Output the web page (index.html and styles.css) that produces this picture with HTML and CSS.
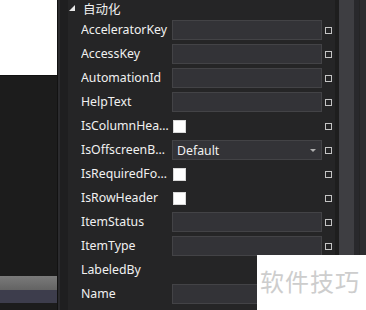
FILE: index.html
```html
<!DOCTYPE html>
<html lang="zh-cn">
<head>
    <meta charset="UTF-8">
    <meta name="viewport" content="width=device-width, initial-scale=1.0">
    <title>属性 - 自动化</title>
    <link rel="stylesheet" href="styles.css">
</head>
<body>
    <div class="screen">
        <div class="left-pane">
            <div class="preview"></div>
            <div class="status-bar"></div>
            <div class="tab-bar"></div>
        </div>
        <div class="splitter"></div>

        <div class="props">
            <div class="group-head">
                <svg class="expander" width="6" height="6" viewBox="0 0 6 6"><polygon points="0,6 6,6 6,0" /></svg>
                <span>自动化</span>
            </div>
            <div class="prop-row">
                <span class="prop-name">AcceleratorKey</span>
                <span class="prop-input"></span>
                <span class="prop-mark"></span>
            </div>
            <div class="prop-row">
                <span class="prop-name">AccessKey</span>
                <span class="prop-input"></span>
                <span class="prop-mark"></span>
            </div>
            <div class="prop-row">
                <span class="prop-name">AutomationId</span>
                <span class="prop-input"></span>
                <span class="prop-mark"></span>
            </div>
            <div class="prop-row">
                <span class="prop-name">HelpText</span>
                <span class="prop-input"></span>
                <span class="prop-mark"></span>
            </div>
            <div class="prop-row">
                <span class="prop-name">IsColumnHeader</span>
                <span class="prop-value"><span class="check"></span></span>
                <span class="prop-mark"></span>
            </div>
            <div class="prop-row">
                <span class="prop-name">IsOffscreenBehavior</span>
                <span class="prop-input select">Default<span class="arrow"></span></span>
                <span class="prop-mark"></span>
            </div>
            <div class="prop-row">
                <span class="prop-name">IsRequiredForForm</span>
                <span class="prop-value"><span class="check"></span></span>
                <span class="prop-mark"></span>
            </div>
            <div class="prop-row">
                <span class="prop-name">IsRowHeader</span>
                <span class="prop-value"><span class="check"></span></span>
                <span class="prop-mark"></span>
            </div>
            <div class="prop-row">
                <span class="prop-name">ItemStatus</span>
                <span class="prop-input"></span>
                <span class="prop-mark"></span>
            </div>
            <div class="prop-row">
                <span class="prop-name">ItemType</span>
                <span class="prop-input"></span>
                <span class="prop-mark"></span>
            </div>
            <div class="prop-row">
                <span class="prop-name">LabeledBy</span>
            </div>
            <div class="prop-row">
                <span class="prop-name">Name</span>
                <span class="prop-input"></span>
                <span class="prop-mark"></span>
            </div>
        </div>

        <div class="scroll-gap"></div>
        <div class="scrollbar"></div>
        <div class="scroll-edge"></div>

        <div class="watermark">软件技巧</div>
    </div>
</body>
</html>
```

FILE: styles.css
```css
/* base */
* {
    margin: 0;
    padding: 0;
    box-sizing: border-box;
}

body {
    background: #1e1e1e;
    font-family: "Noto Sans", "Noto Sans CJK SC", sans-serif;
    font-size: 12.3px;
    color: #f1f1f1;
}

.screen {
    position: relative;
    display: flex;
    width: 366px;
    height: 310px;
    overflow: hidden;
    background: #252526;
}

/* designer area on the left */
.left-pane {
    display: flex;
    flex-direction: column;
    width: 57px;
    background: #1c1c1c;
}

.preview {
    height: 76px;
    background: #ffffff;
    border-bottom: 1px solid #111111;
}

.status-bar {
    margin-top: auto;
    height: 14px;
    background: linear-gradient(#7a7a7a, #636363);
}

.tab-bar {
    height: 13px;
    margin-bottom: 7px;
    background: #3d3d4c;
}

.splitter {
    width: 3px;
    background: #2b2b2e;
    border-left: 1px solid #121212;
}

/* property grid */
.props {
    width: 275px;
    background: #252526;
    border-left: 8px solid #1f1f20;
}

.group-head {
    display: flex;
    align-items: center;
    height: 18px;
    padding-left: 1px;
}

.expander {
    fill: #e8e8e8;
    margin-right: 8px;
    margin-top: -3px;
}

.group-head span {
    font-family: "Noto Sans CJK SC", sans-serif;
    font-size: 12.5px;
    margin-top: -1px;
}

.prop-row {
    display: flex;
    align-items: center;
    height: 24px;
    padding-left: 13px;
}

.prop-name {
    width: 91px;
    padding-right: 3px;
    margin-top: -1px;
    white-space: nowrap;
    overflow: hidden;
    text-overflow: ellipsis;
}

.prop-input,
.prop-value {
    position: relative;
    display: flex;
    align-items: center;
    width: 150px;
    height: 20px;
}

.prop-input {
    background: #333337;
    border: 1px solid #434346;
}

.select {
    padding-left: 4px;
}

.arrow {
    position: absolute;
    right: 5px;
    top: 8px;
    border-left: 3px solid transparent;
    border-right: 3px solid transparent;
    border-top: 3px solid #b0b0b0;
}

.check {
    width: 13px;
    height: 13px;
    margin-left: 1px;
    background: #ffffff;
    border: 1px solid #d8d8d8;
}

.prop-mark {
    width: 7px;
    height: 7px;
    margin-left: 3px;
    border: 1px solid #c4c4c4;
}

/* scrollbar strip */
.scroll-gap {
    width: 4px;
    background: #1e1e1e;
}

.scrollbar {
    width: 15px;
    background: #3e3e42;
}

.scroll-edge {
    flex: 1;
    background: #2d2d30;
    border-left: 5px solid #29292c;
    box-shadow: inset 1px 0 0 #252526;
}

/* watermark over the corner */
.watermark {
    position: absolute;
    left: 257px;
    top: 255px;
    width: 109px;
    height: 55px;
    padding: 11px 0 0 3px;
    background: #ffffff;
    font-family: "Noto Sans CJK SC", sans-serif;
    font-size: 24px;
    line-height: 30px;
    letter-spacing: 1px;
    color: #cdcdcd;
}
```
